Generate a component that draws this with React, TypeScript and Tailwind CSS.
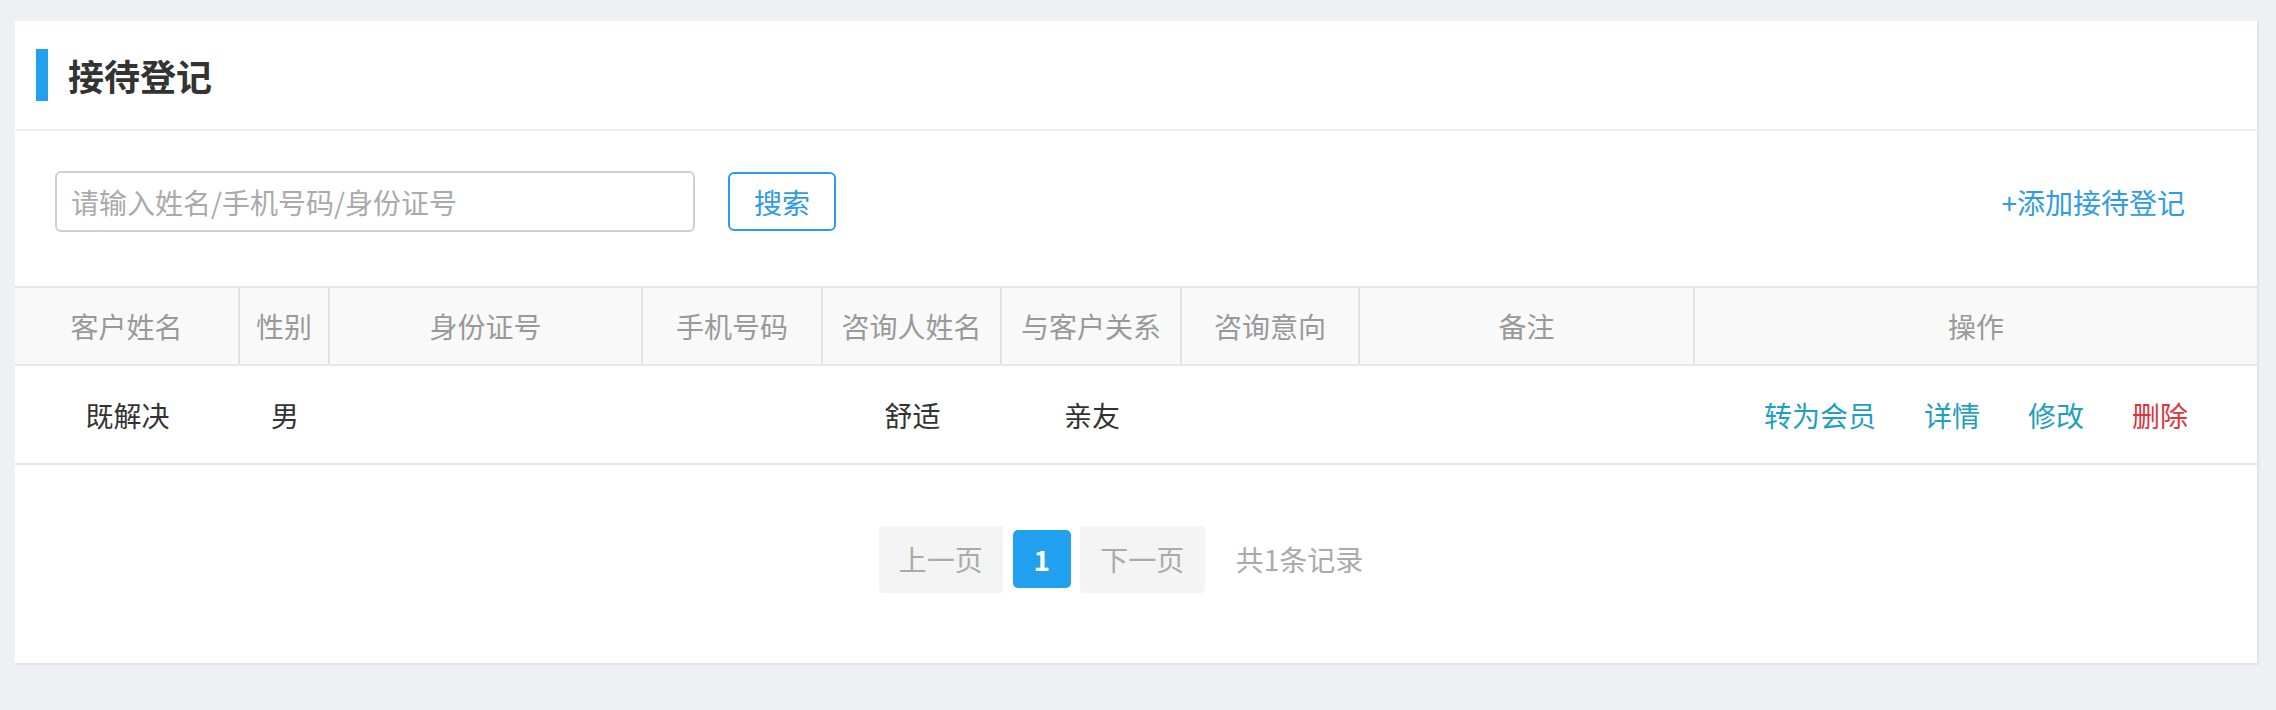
const cols = [
  { title: "客户姓名", w: "w-[225px]" },
  { title: "性别", w: "w-[90px]" },
  { title: "身份证号", w: "w-[313px]" },
  { title: "手机号码", w: "w-[180px]" },
  { title: "咨询人姓名", w: "w-[179px]" },
  { title: "与客户关系", w: "w-[180px]" },
  { title: "咨询意向", w: "w-[178px]" },
  { title: "备注", w: "w-[335px]" },
  { title: "操作", w: "flex-1" },
];

const row = ["既解决", "男", "", "", "舒适", "亲友", "", ""];

export default function App() {
  return (
    <div
      className="h-[710px] bg-[#eef0f3] pt-[21px] pl-[15px] pr-[17px]"
      style={{ fontFamily: '"Noto Sans CJK SC", "Noto Sans", sans-serif' }}
    >
      <div className="h-[644px] bg-white border-r-2 border-b-2 border-[#e1e4e8] flex flex-col">
        {/* 标题 */}
        <div className="h-[110px] border-b-2 border-[#eef0f3] flex items-center pl-[21px]">
          <span className="w-[12px] h-[52px] bg-[#22a0f0]" />
          <h1 className="ml-[20px] text-[36px] font-bold text-[#333] leading-none">
            接待登记
          </h1>
        </div>

        {/* 搜索 */}
        <div className="h-[155px] flex items-start pt-[40px] pl-[40px] pr-[72px]">
          <input
            className="w-[640px] h-[61px] border-2 border-[#cfcfcf] rounded-[6px] px-[14px] text-[28px] text-[#333] placeholder:text-[#aaa] outline-none"
            placeholder="请输入姓名/手机号码/身份证号"
          />
          <button className="mt-[1px] ml-[33px] w-[108px] h-[59px] border-2 border-[#2e9be6] rounded-[6px] text-[28px] text-[#2e9be6] bg-white">
            搜索
          </button>
          <a className="ml-auto h-[61px] flex items-center text-[28px] text-[#2e9be6] cursor-pointer">
            +添加接待登记
          </a>
        </div>

        {/* 表格 */}
        <div className="border-t-2 border-[#e6e6e6]">
          <div className="flex h-[78px] bg-[#f9f9f9] border-b-2 border-[#e6e6e6]">
            {cols.map((c, i) => (
              <div
                key={c.title}
                className={`${c.w} flex items-center justify-center text-[28px] text-[#999] ${
                  i < cols.length - 1 ? "border-r-2 border-[#e2e2e2]" : ""
                }`}
              >
                {c.title}
              </div>
            ))}
          </div>
          <div className="flex h-[99px] border-b-2 border-[#e6e6e6]">
            {row.map((v, i) => (
              <div
                key={i}
                className={`${cols[i].w} flex items-center justify-center text-[28px] text-[#333]`}
              >
                {v}
              </div>
            ))}
            <div className="flex-1 flex items-center justify-center gap-[48px] text-[28px]">
              <a className="text-[#1fa0c0] cursor-pointer">转为会员</a>
              <a className="text-[#1fa0c0] cursor-pointer">详情</a>
              <a className="text-[#1fa0c0] cursor-pointer">修改</a>
              <a className="text-[#d9363e] cursor-pointer">删除</a>
            </div>
          </div>
        </div>

        {/* 分页 */}
        <div className="flex-1 flex items-center justify-center pr-[30px] pb-[10px]">
          <button className="w-[124px] h-[67px] rounded-[4px] bg-[#f4f4f5] text-[28px] text-[#aaa]">
            上一页
          </button>
          <button className="ml-[10px] w-[58px] h-[58px] rounded-[5px] bg-[#22a0f0] text-[28px] font-bold text-white">
            1
          </button>
          <button className="ml-[9px] w-[125px] h-[67px] rounded-[4px] bg-[#f4f4f5] text-[28px] text-[#aaa]">
            下一页
          </button>
          <span className="ml-[31px] text-[28px] text-[#aaa]">共1条记录</span>
        </div>
      </div>
    </div>
  );
}
